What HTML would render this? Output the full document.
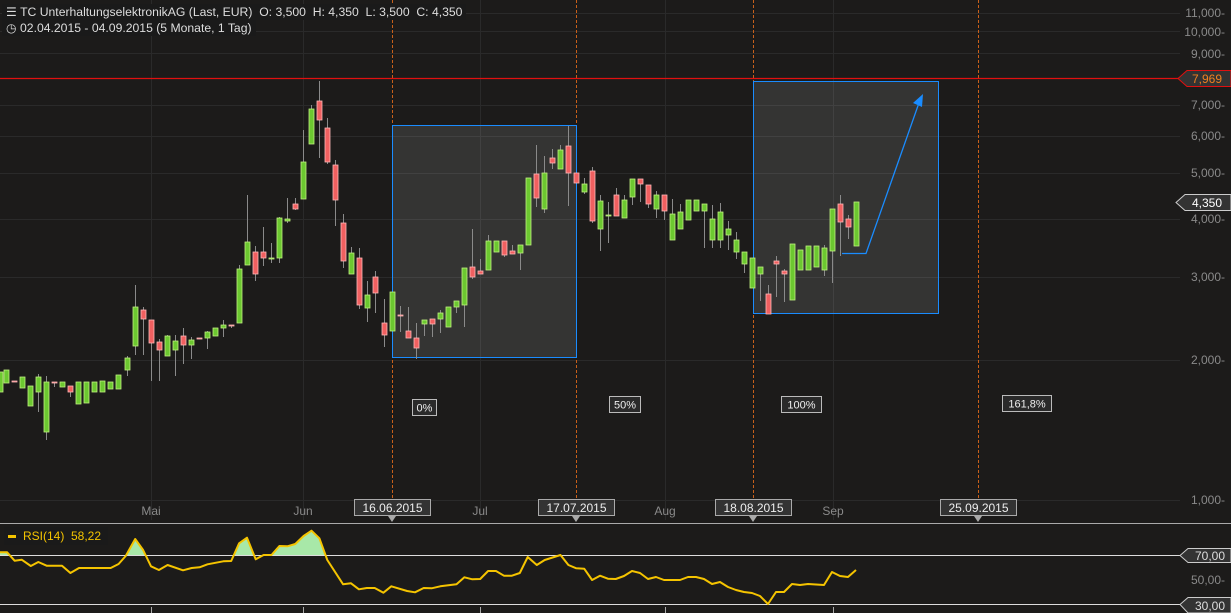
<!DOCTYPE html>
<html><head><meta charset="utf-8"><style>
html,body{margin:0;padding:0;background:#1c1b1a;width:1231px;height:613px;overflow:hidden;font-family:"Liberation Sans",sans-serif}
svg{position:absolute;left:0;top:0}
.hdr{position:absolute;left:2px;background:#1a1a1a;color:#ddd;font-size:12.2px;padding:0 4px;height:16px;line-height:16px;white-space:pre}
</style></head><body>
<svg id="s" width="1231" height="613" xmlns="http://www.w3.org/2000/svg" font-family="Liberation Sans, sans-serif">
<g stroke="#2a2a2a" stroke-width="1">
<line x1="0" y1="13.5" x2="1180" y2="13.5"/><line x1="0" y1="31.5" x2="1180" y2="31.5"/><line x1="0" y1="53.5" x2="1180" y2="53.5"/>
<line x1="0" y1="105.5" x2="1180" y2="105.5"/><line x1="0" y1="136.5" x2="1180" y2="136.5"/><line x1="0" y1="173.5" x2="1180" y2="173.5"/>
<line x1="0" y1="219.5" x2="1180" y2="219.5"/><line x1="0" y1="277.5" x2="1180" y2="277.5"/><line x1="0" y1="360.5" x2="1180" y2="360.5"/><line x1="0" y1="500.5" x2="1180" y2="500.5"/>
<line x1="151.5" y1="0" x2="151.5" y2="520"/><line x1="303.5" y1="0" x2="303.5" y2="520"/><line x1="480.5" y1="0" x2="480.5" y2="520"/><line x1="665.5" y1="0" x2="665.5" y2="520"/><line x1="833.5" y1="0" x2="833.5" y2="520"/>
</g>
<g stroke="#c8601a" stroke-width="1" stroke-dasharray="3,2">
<line x1="392.5" y1="0" x2="392.5" y2="520"/><line x1="576.5" y1="0" x2="576.5" y2="520"/><line x1="753.5" y1="0" x2="753.5" y2="520"/><line x1="978.5" y1="0" x2="978.5" y2="520"/>
</g>
<rect x="392.5" y="125.5" width="184" height="232" fill="rgba(255,255,255,0.11)" stroke="#1a8cff" stroke-width="1"/>
<rect x="753.5" y="81.5" width="185" height="232" fill="rgba(255,255,255,0.11)" stroke="#1a8cff" stroke-width="1"/>
<line x1="0" y1="78.5" x2="1180" y2="78.5" stroke="#e01010" stroke-width="1.3"/>
<g id="c"></g>
<polyline points="842,253.5 866,253.5 920,100" fill="none" stroke="#1a8cff" stroke-width="1.3"/>
<polygon points="923,94 913,103 922,107" fill="#1a8cff"/>
<g font-size="11" text-anchor="middle">
<rect x="412.5" y="399.5" width="24" height="16" fill="#2a2a2a" stroke="#bbb"/><text x="424.5" y="411.5" fill="#eee">0%</text>
<rect x="609.5" y="396.5" width="31" height="16" fill="#2a2a2a" stroke="#bbb"/><text x="625" y="408.5" fill="#eee">50%</text>
<rect x="781.5" y="396.5" width="40" height="16" fill="#2a2a2a" stroke="#bbb"/><text x="801.5" y="408.5" fill="#eee">100%</text>
<rect x="1002.5" y="395.5" width="49" height="16" fill="#2a2a2a" stroke="#bbb"/><text x="1027" y="407.5" fill="#eee">161,8%</text>
</g>
<g font-size="12" fill="#8a8a8a" text-anchor="middle">
<text x="151" y="515">Mai</text><text x="303" y="515">Jun</text><text x="480" y="515">Jul</text><text x="665" y="515">Aug</text><text x="833" y="515">Sep</text>
</g>
<g font-size="12" fill="#eee" text-anchor="middle">
<rect x="354.5" y="499.5" width="76" height="16" fill="#333" stroke="#aaa"/><polygon points="388,516 396,516 392,522" fill="#aaa"/><text x="392.5" y="512">16.06.2015</text>
<rect x="538.5" y="499.5" width="76" height="16" fill="#333" stroke="#aaa"/><polygon points="572,516 580,516 576,522" fill="#aaa"/><text x="576.5" y="512">17.07.2015</text>
<rect x="715.5" y="499.5" width="76" height="16" fill="#333" stroke="#aaa"/><polygon points="749,516 757,516 753,522" fill="#aaa"/><text x="753.5" y="512">18.08.2015</text>
<rect x="940.5" y="499.5" width="76" height="16" fill="#333" stroke="#aaa"/><polygon points="974,516 982,516 978,522" fill="#aaa"/><text x="978.5" y="512">25.09.2015</text>
</g>
<g font-size="12" fill="#8a8a8a" text-anchor="end">
<text x="1225" y="17">11,000-</text><text x="1225" y="36">10,000-</text><text x="1225" y="58">9,000-</text>
<text x="1225" y="109">7,000-</text><text x="1225" y="140">6,000-</text><text x="1225" y="177">5,000-</text>
<text x="1225" y="223">4,000-</text><text x="1225" y="281">3,000-</text><text x="1225" y="364">2,000-</text><text x="1225" y="504">1,000-</text>
</g>
<polygon points="1178,78.5 1187,70.5 1231,70.5 1231,86.5 1187,86.5" fill="#333" stroke="#e01010"/>
<text x="1222" y="83" font-size="12" fill="#f08020" text-anchor="end">7,969</text>
<polygon points="1176,202.5 1185,194.5 1231,194.5 1231,210.5 1185,210.5" fill="#333" stroke="#ccc"/>
<text x="1222" y="207" font-size="12" fill="#fff" text-anchor="end">4,350</text>
<line x1="0" y1="523.5" x2="1231" y2="523.5" stroke="#aaa"/>
<line x1="151.5" y1="607" x2="151.5" y2="613" stroke="#aaa"/><line x1="303.5" y1="607" x2="303.5" y2="613" stroke="#aaa"/><line x1="480.5" y1="607" x2="480.5" y2="613" stroke="#aaa"/><line x1="665.5" y1="607" x2="665.5" y2="613" stroke="#aaa"/><line x1="833.5" y1="607" x2="833.5" y2="613" stroke="#aaa"/>
<clipPath id="cp"><rect x="0" y="520" width="1231" height="35.5"/></clipPath>
<polygon id="rf" clip-path="url(#cp)" fill="#a8e8a8"/>
<line x1="0" y1="555.5" x2="1180" y2="555.5" stroke="#ddd"/>
<line x1="0" y1="604.5" x2="1180" y2="604.5" stroke="#ddd"/>
<polyline id="rl" fill="none" stroke="#f5c400" stroke-width="2" stroke-linejoin="round"/>
<rect x="4" y="527" width="104" height="18" fill="#1a1a1a"/>
<rect x="8" y="535" width="8" height="3" fill="#f5c400"/>
<text x="23" y="540" font-size="12" fill="#f5c400">RSI(14)</text>
<text x="71" y="540" font-size="12" fill="#f5c400">58,22</text>
<polygon points="1180,555.5 1188,548.5 1231,548.5 1231,562.5 1188,562.5" fill="#333" stroke="#ccc"/>
<text x="1225" y="560" font-size="12" fill="#ddd" text-anchor="end">70,00</text>
<text x="1225" y="584" font-size="12" fill="#8a8a8a" text-anchor="end">50,00-</text>
<polygon points="1180,604.5 1188,597.5 1231,597.5 1231,613 1188,613" fill="#333" stroke="#ccc"/>
<text x="1225" y="610" font-size="12" fill="#ddd" text-anchor="end">30,00</text>
</svg>
<div class="hdr" style="top:4px">&#9776; TC UnterhaltungselektronikAG (Last, EUR)  O: 3,500  H: 4,350  L: 3,500  C: 4,350</div>
<div class="hdr" style="top:20px">&#9719; 02.04.2015 - 04.09.2015 (5 Monate, 1 Tag)</div>
<script>
var D=[[0,372,392,372,392,'g'],[6,370,383,370,383,'g'],[14,381,382,381,382,'r'],[22,377,388,377,388,'g'],[30,386,406,386,406,'g'],[38,377,392,374,412,'g'],[46,382,432,376,440,'g'],[54,382,383,382,387,'r'],[62,382,387,382,387,'g'],[70,386,392,386,397,'r'],[78,382,404,382,404,'g'],[86,382,403,382,403,'g'],[94,382,392,382,392,'g'],[102,381,392,381,392,'g'],[110,382,389,382,389,'g'],[118,375,389,375,389,'g'],[127,358,370,356,376,'g'],[135,307,346,285,355,'g'],[143,310,319,307,355,'r'],[151,320,343,320,381,'r'],[159,342,350,339,381,'r'],[167,336,356,335,356,'g'],[175,341,350,335,376,'g'],[183,336,345,328,364,'r'],[191,340,345,337,359,'g'],[199,338,339,338,339,'r'],[207,332,338,331,349,'g'],[215,328,336,328,336,'g'],[223,325,328,320,337,'g'],[231,325,326,325,328,'r'],[239,269,323,265,323,'g'],[247,242,265,195,265,'g'],[255,252,274,246,281,'r'],[263,252,258,227,266,'r'],[271,258,259,243,263,'g'],[279,218,258,217,263,'g'],[287,219,221,198,223,'g'],[295,204,209,198,210,'r'],[303,162,199,130,199,'g'],[311,109,144,105,144,'g'],[319,101,120,81,158,'r'],[327,128,162,118,164,'r'],[335,165,200,160,226,'r'],[343,223,261,214,268,'r'],[351,253,274,247,274,'g'],[359,258,305,248,309,'r'],[367,295,308,281,322,'g'],[375,277,293,271,313,'r'],[384,323,335,299,347,'r'],[392,292,331,292,331,'g'],[400,315,316,306,332,'r'],[408,331,338,307,338,'r'],[416,338,348,323,359,'r'],[424,320,324,320,336,'g'],[432,319,324,319,337,'r'],[440,313,319,310,333,'g'],[448,307,327,307,327,'g'],[456,301,307,301,313,'g'],[464,268,305,268,327,'g'],[472,267,277,229,279,'r'],[480,271,274,259,274,'r'],[488,241,270,235,270,'g'],[496,241,252,241,252,'g'],[504,241,255,241,257,'r'],[512,251,254,245,254,'r'],[520,245,253,245,270,'g'],[528,178,245,178,245,'g'],[536,174,198,145,207,'r'],[544,173,209,156,213,'g'],[552,158,163,149,169,'r'],[560,150,169,145,169,'g'],[568,146,173,126,206,'r'],[576,173,183,173,183,'r'],[584,184,192,178,194,'g'],[592,171,221,167,223,'r'],[600,201,229,195,251,'g'],[608,215,216,202,243,'g'],[616,195,216,188,216,'r'],[624,200,218,195,218,'g'],[632,179,197,179,205,'g'],[640,179,184,179,202,'r'],[648,185,204,185,208,'r'],[656,195,209,191,218,'g'],[664,195,211,195,220,'r'],[672,214,240,199,240,'g'],[680,212,229,204,229,'g'],[688,200,220,200,220,'g'],[696,200,211,200,211,'g'],[704,204,211,204,248,'g'],[712,219,240,205,248,'g'],[720,212,240,203,248,'g'],[728,229,235,221,250,'g'],[736,240,252,232,259,'g'],[744,252,264,252,273,'g'],[752,258,288,258,288,'g'],[760,267,274,267,301,'g'],[768,294,314,285,314,'r'],[776,261,264,256,297,'r'],[784,271,274,269,302,'r'],[792,244,300,244,300,'g'],[800,250,270,250,270,'g'],[808,246,270,246,270,'g'],[816,246,267,246,267,'g'],[824,248,270,245,276,'g'],[832,209,251,209,283,'g'],[840,204,222,195,256,'r'],[848,219,227,215,239,'r'],[856,202,246,202,246,'g']];
var h='';D.forEach(function(d){var x=d[0]+0.5,g=d[5]=='g';
h+='<line x1="'+x+'" y1="'+d[3]+'" x2="'+x+'" y2="'+d[4]+'" stroke="#8a8a8a"/>';
var hh=Math.max(d[2]-d[1],1);
h+='<rect x="'+(d[0]-2)+'" y="'+d[1]+'" width="5" height="'+hh+'" fill="'+(g?'#6cc830':'#f06060')+'" stroke="'+(g?'#c0f080':'#ffb8b8')+'" stroke-width="0.8"/>';});
document.getElementById('c').innerHTML=h;
var R=[[0,552.3],[7.1,552.3],[14.6,560.7],[21.7,559.7],[30.8,566],[38.3,562],[46.6,565.7],[62,565.7],[70.4,573],[79,568],[110.7,568],[118.6,564],[125.7,556],[135.2,539],[143.1,550],[151,566.3],[158.9,570],[167.6,565],[183,570.3],[191.7,568],[199.6,567.3],[207.5,564.3],[223.3,561.3],[231.2,561],[239.1,543.3],[247,537.7],[255.7,559.3],[263.6,555],[271.5,555],[279.4,546],[287.4,546.3],[295.3,544],[303.6,536],[311.5,530.7],[319.4,538.3],[327.3,560],[343.1,584.3],[351,583.3],[358.9,589.3],[366.8,588],[374.7,588],[383.4,592.7],[391.3,586.3],[407.1,591],[415,592.3],[423.7,588],[431.6,588.3],[440.3,586.3],[456.5,584.3],[464.4,577.3],[472.3,579.3],[480.2,579],[488.1,571],[496,571],[503.9,575.7],[511.9,575.7],[519.8,573],[527.7,557],[536.8,565],[544.7,560],[560.5,555],[568.4,565],[576.3,568.3],[584.2,568.7],[592.1,580],[600,575.7],[607.9,578.7],[615.8,579],[624,576],[632,571],[640,573],[648,579],[656,577],[664,580],[680,580],[688,577],[696,577],[704,579],[712,584],[720,582],[728,587],[736,590],[744,592],[752,593],[760,596],[768,604],[776,592],[784,592],[792,584],[800,585],[808,584],[824,585],[832,572],[840,576],[848,577],[856,570]];
var p=R.map(function(a){return a[0]+','+a[1]}).join(' ');
document.getElementById('rl').setAttribute('points',p);
document.getElementById('rf').setAttribute('points','0,555.5 '+p+' 856,555.5');
</script>
</body></html>
